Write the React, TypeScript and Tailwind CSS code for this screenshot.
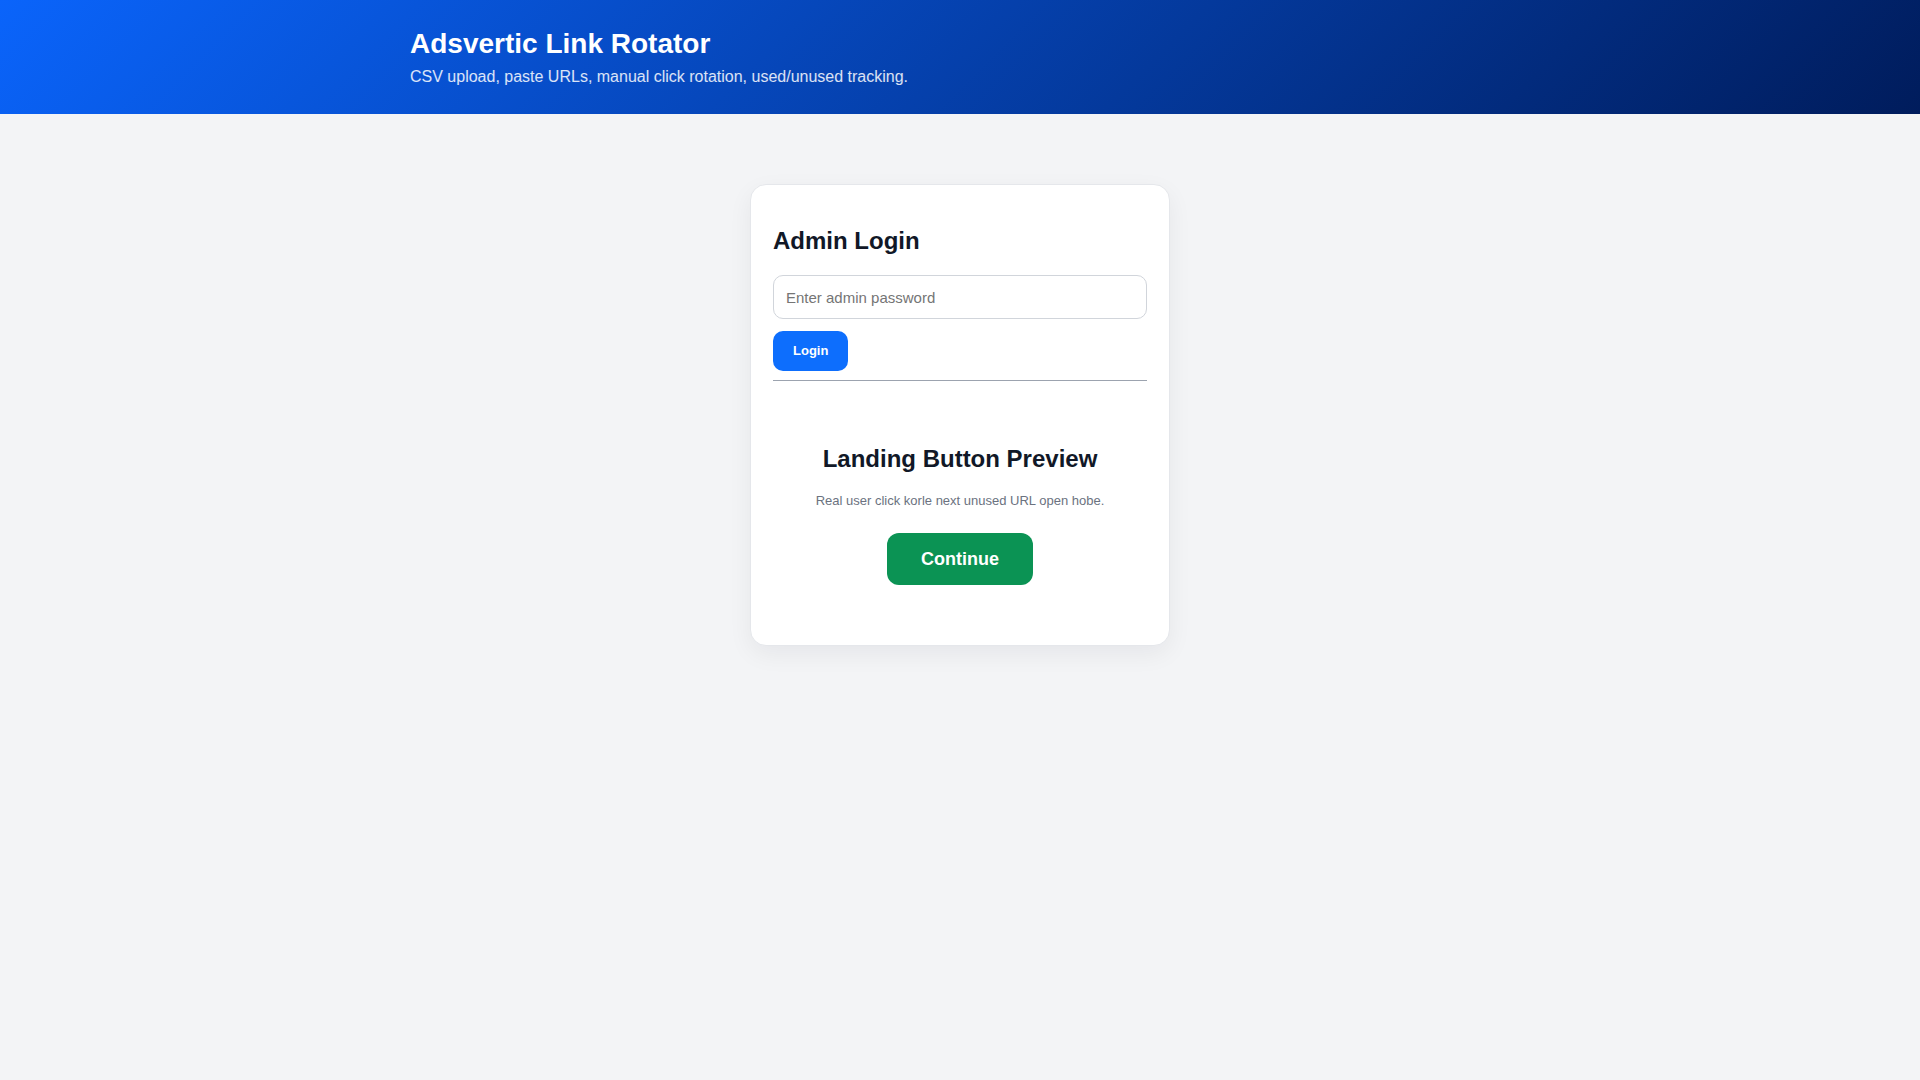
export default function App() {
  return (
    <div className="min-h-screen bg-[#f3f4f6] font-['Liberation_Sans',Arial,sans-serif] text-[#111827]">
      {/* Top banner */}
      <header className="h-[114px] bg-linear-[135deg] from-[#0a64fb] to-[#001c5c] text-white">
        <div className="mx-auto max-w-[1100px] pt-7">
          <h1 className="m-0 text-[28px] font-bold leading-[32px]">Adsvertic Link Rotator</h1>
          <p className="mt-[5px] text-[16px] leading-6 text-white/85">
            CSV upload, paste URLs, manual click rotation, used/unused tracking.
          </p>
        </div>
      </header>

      <main className="pt-[70px]">
        <div className="mx-auto w-[420px] rounded-2xl border border-[#e5e7eb] bg-white p-[22px] shadow-[0_8px_24px_rgba(15,23,42,0.06)]">
          <h2 className="my-5 text-2xl font-bold leading-7">Admin Login</h2>
          <input
            type="password"
            placeholder="Enter admin password"
            className="block h-11 w-full rounded-[10px] border border-[#d1d5db] bg-white px-3 text-[15px] outline-none placeholder:text-[#757575]"
          />
          <button className="mt-3 h-10 rounded-[10px] bg-[#0d6efd] px-5 text-[13px] font-bold text-white">
            Login
          </button>
          <hr className="mt-[9px] border-0 border-t border-[#9ca3af]" />

          <div className="text-center">
            <h2 className="mt-16 text-2xl font-bold leading-7">Landing Button Preview</h2>
            <p className="mt-5 text-[13px] leading-[15px] text-[#6b7280]">
              Real user click korle next unused URL open hobe.
            </p>
            <button className="mt-[25px] mb-[38px] h-[52px] rounded-xl bg-[#0b9354] px-[34px] text-lg font-bold text-white">
              Continue
            </button>
          </div>
        </div>
      </main>
    </div>
  );
}
